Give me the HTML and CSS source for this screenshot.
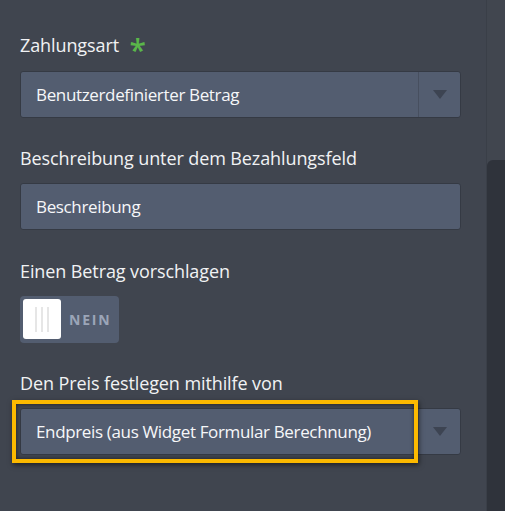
FILE: index.html
```html
<!DOCTYPE html>
<html lang="de">
<head>
<meta charset="utf-8">
<link rel="stylesheet" href="styles.css">
</head>
<body>
<div class="page">
  <div class="panel">
    <div class="group">
      <div class="label">Zahlungsart <span class="req">*</span></div>
      <div class="select">
        <div class="select-value">Benutzerdefinierter Betrag</div>
        <div class="select-arrow"><span class="tri"></span></div>
      </div>
    </div>
    <div class="group">
      <div class="label">Beschreibung unter dem Bezahlungsfeld</div>
      <div class="input">Beschreibung</div>
    </div>
    <div class="group">
      <div class="label">Einen Betrag vorschlagen</div>
      <div class="toggle">
        <div class="knob"><span class="grip"></span><span class="grip"></span><span class="grip"></span></div>
        <div class="toggle-text">NEIN</div>
      </div>
    </div>
    <div class="group">
      <div class="label">Den Preis festlegen mithilfe von</div>
      <div class="select highlighted">
        <div class="select-value">Endpreis (aus Widget Formular Berechnung)</div>
        <div class="select-arrow"><span class="tri"></span></div>
        <div class="highlight"></div>
      </div>
    </div>
  </div>
  <div class="scrollbar"><div class="thumb"></div></div>
</div>
</body>
</html>
```
FILE: styles.css
```css
html, body {
  margin: 0;
  padding: 0;
  height: 100%;
  background: #40454f;
}
body {
  font-family: "Open Sans", "Noto Sans", sans-serif;
  color: #f1f2f4;
}
.page {
  display: flex;
  height: 511px;
  overflow: hidden;
}
.panel {
  flex: 1;
  padding: 33px 25px 0 20px;
  display: flex;
  flex-direction: column;
  gap: 28.4px;
}
.label {
  font-size: 18px;
  line-height: 24px;
  margin-bottom: 13px;
  letter-spacing: -0.1px;
}
.req {
  color: #5ab64a;
  font-weight: 600;
  font-size: 30px;
  line-height: 17px;
  margin-left: 6px;
  vertical-align: -9px;
}
.select, .input {
  box-sizing: border-box;
  height: 47px;
  background: #535d70;
  border: 1px solid #353a44;
  border-radius: 3px;
  display: flex;
  align-items: center;
  font-size: 17px;
  letter-spacing: -0.35px;
  color: #f6f7f9;
}
.select {
  position: relative;
}
.select-value {
  flex: 1;
  padding-left: 15px;
}
.input {
  padding-left: 15px;
}
.select-arrow {
  width: 41px;
  height: 100%;
  border-left: 1px solid #474f5f;
  display: flex;
  align-items: center;
  justify-content: center;
}
.tri {
  width: 0;
  height: 0;
  border-left: 7px solid transparent;
  border-right: 7px solid transparent;
  border-top: 9px solid #3d4452;
}
.toggle {
  width: 99px;
  height: 47px;
  box-sizing: border-box;
  background: #535d70;
  border-radius: 4px;
  padding: 3px;
  display: flex;
  align-items: center;
  gap: 8px;
}
.knob {
  width: 38px;
  height: 40px;
  background: #fff;
  border-radius: 3px;
  display: flex;
  justify-content: center;
  gap: 4px;
  align-items: center;
}
.grip {
  width: 2px;
  height: 25px;
  background: #e6e6e6;
}
.toggle-text {
  font-weight: 700;
  font-size: 14px;
  letter-spacing: 1.8px;
  color: #9ba5b8;
}
.highlight {
  position: absolute;
  left: -9px;
  top: -9px;
  width: 406px;
  height: 63px;
  box-sizing: border-box;
  border: 4px solid #fcb900;
  box-shadow: 1px 2px 5px rgba(0,0,0,0.55), inset 0 0 4px rgba(0,0,0,0.55);
  pointer-events: none;
}
.scrollbar {
  width: 18px;
  border-left: 1px solid #3a3f48;
  background: #41464f;
  display: flex;
  flex-direction: column;
}
.thumb {
  margin-top: 160px;
  flex: 1;
  background: #2f333b;
  border-radius: 6px 0 0 0;
}
```
